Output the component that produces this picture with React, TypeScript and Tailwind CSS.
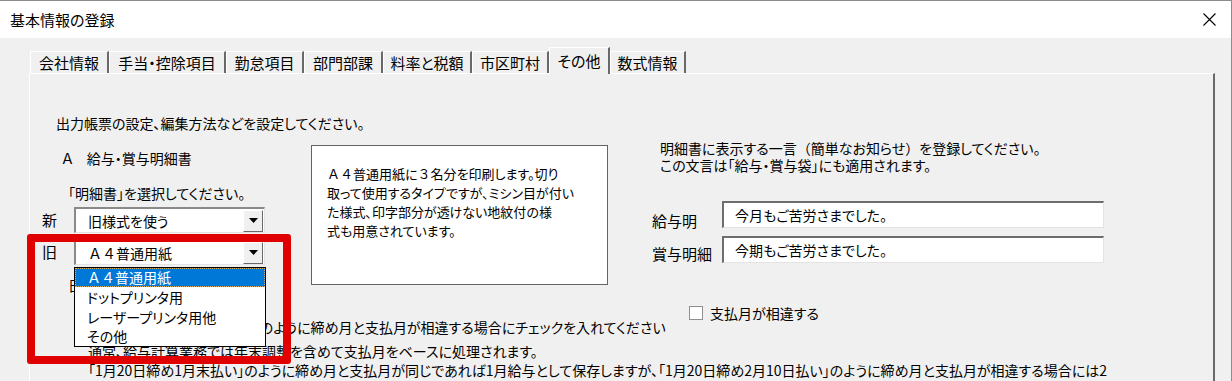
import { ReactNode } from "react";

const tabs = [
  { label: "会社情報", w: "w-[79px]" },
  { label: "手当・控除項目", w: "w-[117px]" },
  { label: "勤怠項目", w: "w-[78px]" },
  { label: "部門部課", w: "w-[79px]" },
  { label: "料率と税額", w: "w-[89px]" },
  { label: "市区町村", w: "w-[77px]" },
  { label: "その他", w: "w-[61px]", active: true },
  { label: "数式情報", w: "w-[76px]" },
];

function Combo({ children }: { children: ReactNode }) {
  return (
    <div className="flex h-[26px] w-[191px] items-center justify-between border-t-2 border-l-2 border-t-[#8a8a8a] border-l-[#8a8a8a] border-r border-b border-r-[#e3e3e3] border-b-[#e3e3e3] bg-white">
      <span className="pl-[12px] text-[14px] leading-[20px]">{children}</span>
      <div className="mr-[1px] flex h-[22px] w-[20px] items-center justify-center border-t border-l border-white border-r border-b border-r-[#696969] border-b-[#696969] bg-[#f0f0f0]">
        <svg width="9" height="5" viewBox="0 0 9 5">
          <path d="M0 0h9L4.5 5z" fill="#000" />
        </svg>
      </div>
    </div>
  );
}

function TextField({ value }: { value: string }) {
  return (
    <div className="flex h-[27px] w-[382px] items-center border-t-2 border-l-2 border-t-[#6d6d6d] border-l-[#6d6d6d] border-r border-b border-r-[#e3e3e3] border-b-[#e3e3e3] bg-white pl-[11px] text-[14px] leading-[20px]">
      {value}
    </div>
  );
}

export default function App() {
  return (
    <div className="relative flex h-[381px] w-[1232px] flex-col overflow-hidden border-t border-r border-[#8c8c8c] bg-[#f0f0f0] text-black font-['Noto_Sans_CJK_JP',sans-serif] [font-feature-settings:'palt']">
      {/* title bar */}
      <div className="flex h-[37px] shrink-0 items-center justify-between bg-white pl-[10px] pr-[14px]">
        <span className="text-[15px] leading-[20px]">基本情報の登録</span>
        <svg width="13" height="13" viewBox="0 0 13 13" className="mr-[1px]">
          <path d="M0.5 0.5l12 12M12.5 0.5l-12 12" stroke="#000" strokeWidth="1.1" />
        </svg>
      </div>

      {/* tabs */}
      <div className="flex h-[35px] shrink-0 items-end pl-[30px]">
        {tabs.map((t) =>
          t.active ? (
            <div
              key={t.label}
              className={`${t.w} relative z-10 mb-[-1px] flex h-[27px] items-start justify-center border-t border-l border-white border-r-2 border-r-[#696969] bg-[#f0f0f0] pt-[3px] text-[15px] leading-[20px]`}
            >
              {t.label}
            </div>
          ) : (
            <div
              key={t.label}
              className={`${t.w} flex h-[22px] items-center justify-center border-t border-l border-white border-r-2 border-r-[#696969] text-[15px] leading-[20px]`}
            >
              {t.label}
            </div>
          )
        )}
      </div>

      {/* panel */}
      <div className="ml-[29px] w-[1186px] flex-1 border-t border-l border-white border-r-2 border-r-[#696969] text-[14px]">
        <p className="pl-[26px] pt-[39px] leading-[20px]">出力帳票の設定、編集方法などを設定してください。</p>

        <div className="mt-[7px] flex items-start">
          {/* left column */}
          <div className="w-[281px] pl-[12px]">
            <p className="mt-[8px] pl-[20px] leading-[20px]">Ａ　給与・賞与明細書</p>
            <p className="mt-[15px] pl-[26px] leading-[20px]">「明細書」を選択してください。</p>
            <div className="mt-[4px] flex items-center">
              <span className="w-[32px] text-[15px] leading-[20px]">新</span>
              <Combo>旧様式を使う</Combo>
            </div>
            <div className="relative mt-[6px] flex items-center">
              <span className="w-[32px] text-[15px] leading-[20px]">旧</span>
              <Combo>
                <span className="[font-feature-settings:normal]">Ａ４</span>普通用紙
              </Combo>
              {/* open dropdown list */}
              <div className="absolute left-[32px] top-[28px] z-20 w-[192px] border border-black bg-white">
                <div className="flex h-[19px] items-center bg-[#0078d7] pl-[12px] text-white leading-[19px] outline-1 outline-dotted outline-offset-[-1px] outline-[#d8b060]">
                  <span className="[font-feature-settings:normal]">Ａ４</span>普通用紙
                </div>
                <div className="flex h-[20px] items-center pl-[12px] leading-[20px]">ドットプリンタ用</div>
                <div className="flex h-[20px] items-center pl-[12px] leading-[20px]">レーザープリンタ用他</div>
                <div className="flex h-[19px] items-center pl-[12px] leading-[19px]">その他</div>
              </div>
            </div>
            <p className="mt-[10px] pl-[26px] leading-[20px]">日付の処理</p>
          </div>

          {/* description box */}
          <div className="mt-[5px] h-[140px] w-[297px] border border-[#646464] bg-white pl-[15px] pt-[18px] text-[13px] leading-[19px]">
            <span className="[font-feature-settings:normal]">Ａ４</span>普通用紙に<span className="[font-feature-settings:normal]">３</span>名分を印刷します。切り
            <br />
            取って使用するタイプですが、ミシン目が付い
            <br />
            た様式、印字部分が透けない地紋付の様
            <br />
            式も用意されています。
          </div>

          {/* right column */}
          <div className="pl-[44px]">
            <div className="pl-[8px] leading-[17px]">
              <p>明細書に表示する一言<span className="[font-feature-settings:normal]">（</span>簡単なお知らせ<span className="[font-feature-settings:normal]">）</span>を登録してください。</p>
              <p>この文言は「給与・賞与袋」にも適用されます。</p>
            </div>
            <div className="mt-[27px] flex items-start">
              <span className="mt-[10px] w-[70px] text-[15px] leading-[20px]">給与明</span>
              <TextField value="今月もご苦労さまでした。" />
            </div>
            <div className="mt-[5px] flex items-start">
              <span className="mt-[8px] w-[70px] text-[15px] leading-[20px]">賞与明細</span>
              <TextField value="今期もご苦労さまでした。" />
            </div>
          </div>
        </div>

        {/* bottom */}
        <div className="mt-[11px] flex items-start">
          <p className="mt-[11px] w-[661px] pl-[58px] leading-[20px]">「1月20日締め2月10日払い」のように締め月と支払月が相違する場合にチェックを入れてください</p>
          <label className="flex items-center gap-[7px]">
            <span className="ml-[-2px] h-[14px] w-[14px] border border-[#8f8f8f] bg-white" />
            <span className="leading-[14px]">支払月が相違する</span>
          </label>
        </div>
        <p className="mt-[5px] pl-[58px] leading-[19px]">通常、給与計算業務では年末調整を含めて支払月をベースに処理されます。</p>
        <p className="whitespace-nowrap pl-[58px] leading-[19px]">「1月20日締め1月末払い」のように締め月と支払月が同じであれば1月給与として保存しますが、「1月20日締め2月10日払い」のように締め月と支払月が相違する場合には2</p>
      </div>

      {/* red highlight */}
      <div className="pointer-events-none absolute left-[27px] top-[233px] z-30 h-[130px] w-[264px] rounded-[3px] border-[8px] border-[#e00000]" />
    </div>
  );
}
